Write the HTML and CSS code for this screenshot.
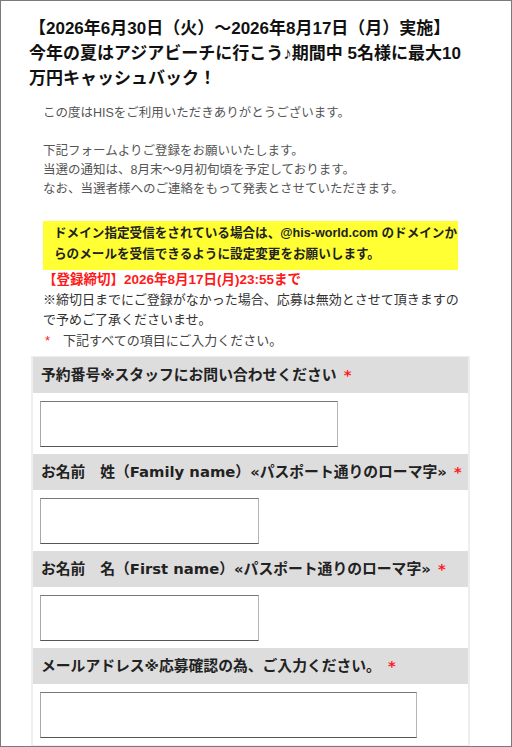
FILE: index.html
```html
<!DOCTYPE html>
<html lang="ja">
<head>
<meta charset="utf-8">
<link rel="stylesheet" href="styles.css">
</head>
<body>
<div class="page">
  <h1 class="title">【2026年6月30日（火）～2026年8月17日（月）実施】<br>今年の夏はアジアビーチに行こう♪期間中 5名様に最大10<br>万円キャッシュバック！</h1>
  <div class="intro">
    <p class="lead">この度はHISをご利用いただきありがとうございます。</p>
    <p class="lead">下記フォームよりご登録をお願いいたします。<br>当選の通知は、8月末～9月初旬頃を予定しております。<br>なお、当選者様へのご連絡をもって発表とさせていただきます。</p>
    <div class="notice">ドメイン指定受信をされている場合は、@his-world.com のドメインか<br>らのメールを受信できるように設定変更をお願いします。</div>
    <p class="deadline">【登録締切】2026年8月17日(月)23:55まで</p>
    <p class="caution">※締切日までにご登録がなかった場合、応募は無効とさせて頂きますの<br>で予めご了承くださいませ。</p>
    <p class="required-note"><span class="star">*</span>　下記すべての項目にご入力ください。</p>
  </div>
  <div class="form">
    <div class="label">予約番号※スタッフにお問い合わせください <span class="star">*</span></div>
    <div class="field"><input class="input w-md" type="text"></div>
    <div class="label">お名前　姓（Family name）«パスポート通りのローマ字» <span class="star">*</span></div>
    <div class="field"><input class="input w-sm" type="text"></div>
    <div class="label">お名前　名（First name）«パスポート通りのローマ字» <span class="star">*</span></div>
    <div class="field"><input class="input w-sm" type="text"></div>
    <div class="label">メールアドレス※応募確認の為、ご入力ください。 <span class="star">*</span></div>
    <div class="field"><input class="input w-lg" type="text"></div>
  </div>
</div>
</body>
</html>
```
FILE: styles.css
```css
html, body {
  margin: 0;
  padding: 0;
  background: #fff;
}
body {
  font-family: "Liberation Sans", "Noto Sans CJK JP", sans-serif;
  color: #333;
}
.page {
  box-sizing: border-box;
  width: 512px;
  height: 747px;
  border: 1px solid #7a7a7a;
  overflow: hidden;
}
.title {
  margin: 15px 0 0 28px;
  font-size: 17px;
  line-height: 25px;
  font-weight: bold;
  color: #111;
  white-space: nowrap;
}
.intro {
  margin: 13px 0 0 42px;
  width: 415px;
}
.intro p {
  margin: 0;
}
.lead {
  font-size: 12.5px;
  line-height: 19px;
  color: #555;
  margin-bottom: 19px !important;
}
.lead + .lead {
  margin-bottom: 22px !important;
}
.notice {
  background: #ffff33;
  padding: 2px 10px 5px 11px;
  font-size: 12.6px;
  line-height: 21px;
  font-weight: bold;
  color: #222;
  white-space: nowrap;
}
.deadline {
  font-size: 13.5px;
  line-height: 20px;
  font-weight: bold;
  color: #ff1a1a;
}
.caution {
  font-size: 13px;
  line-height: 20px;
  color: #333;
  white-space: nowrap;
}
.required-note {
  margin-top: 1px !important;
  font-size: 13px;
  line-height: 20px;
  color: #444;
}
.star {
  color: #ff1a1a;
  padding-left: 2px;
}
.form {
  margin: 5px 0 0 30px;
  width: 439px;
  box-sizing: border-box;
  border: 2px solid #eeeeee;
  border-top-width: 1px;
}
.label {
  height: 36px;
  line-height: 36px;
  background: #dddddd;
  padding-left: 8px;
  font-family: "DejaVu Sans", "Noto Sans CJK JP", sans-serif;
  font-size: 14.8px;
  font-weight: bold;
  color: #222;
  white-space: nowrap;
}
.field {
  padding: 8px 0 7px 7px;
  background: #fff;
  display: flex;
}
.input {
  box-sizing: border-box;
  height: 46px;
  margin: 0;
  padding: 0 4px;
  border-style: solid;
  border-width: 1px;
  border-color: #777 #b5b5b5 #555 #a8a8a8;
  background: #fff;
}
.w-md { width: 298px; }
.w-sm { width: 219px; }
.w-lg { width: 377px; }
```
